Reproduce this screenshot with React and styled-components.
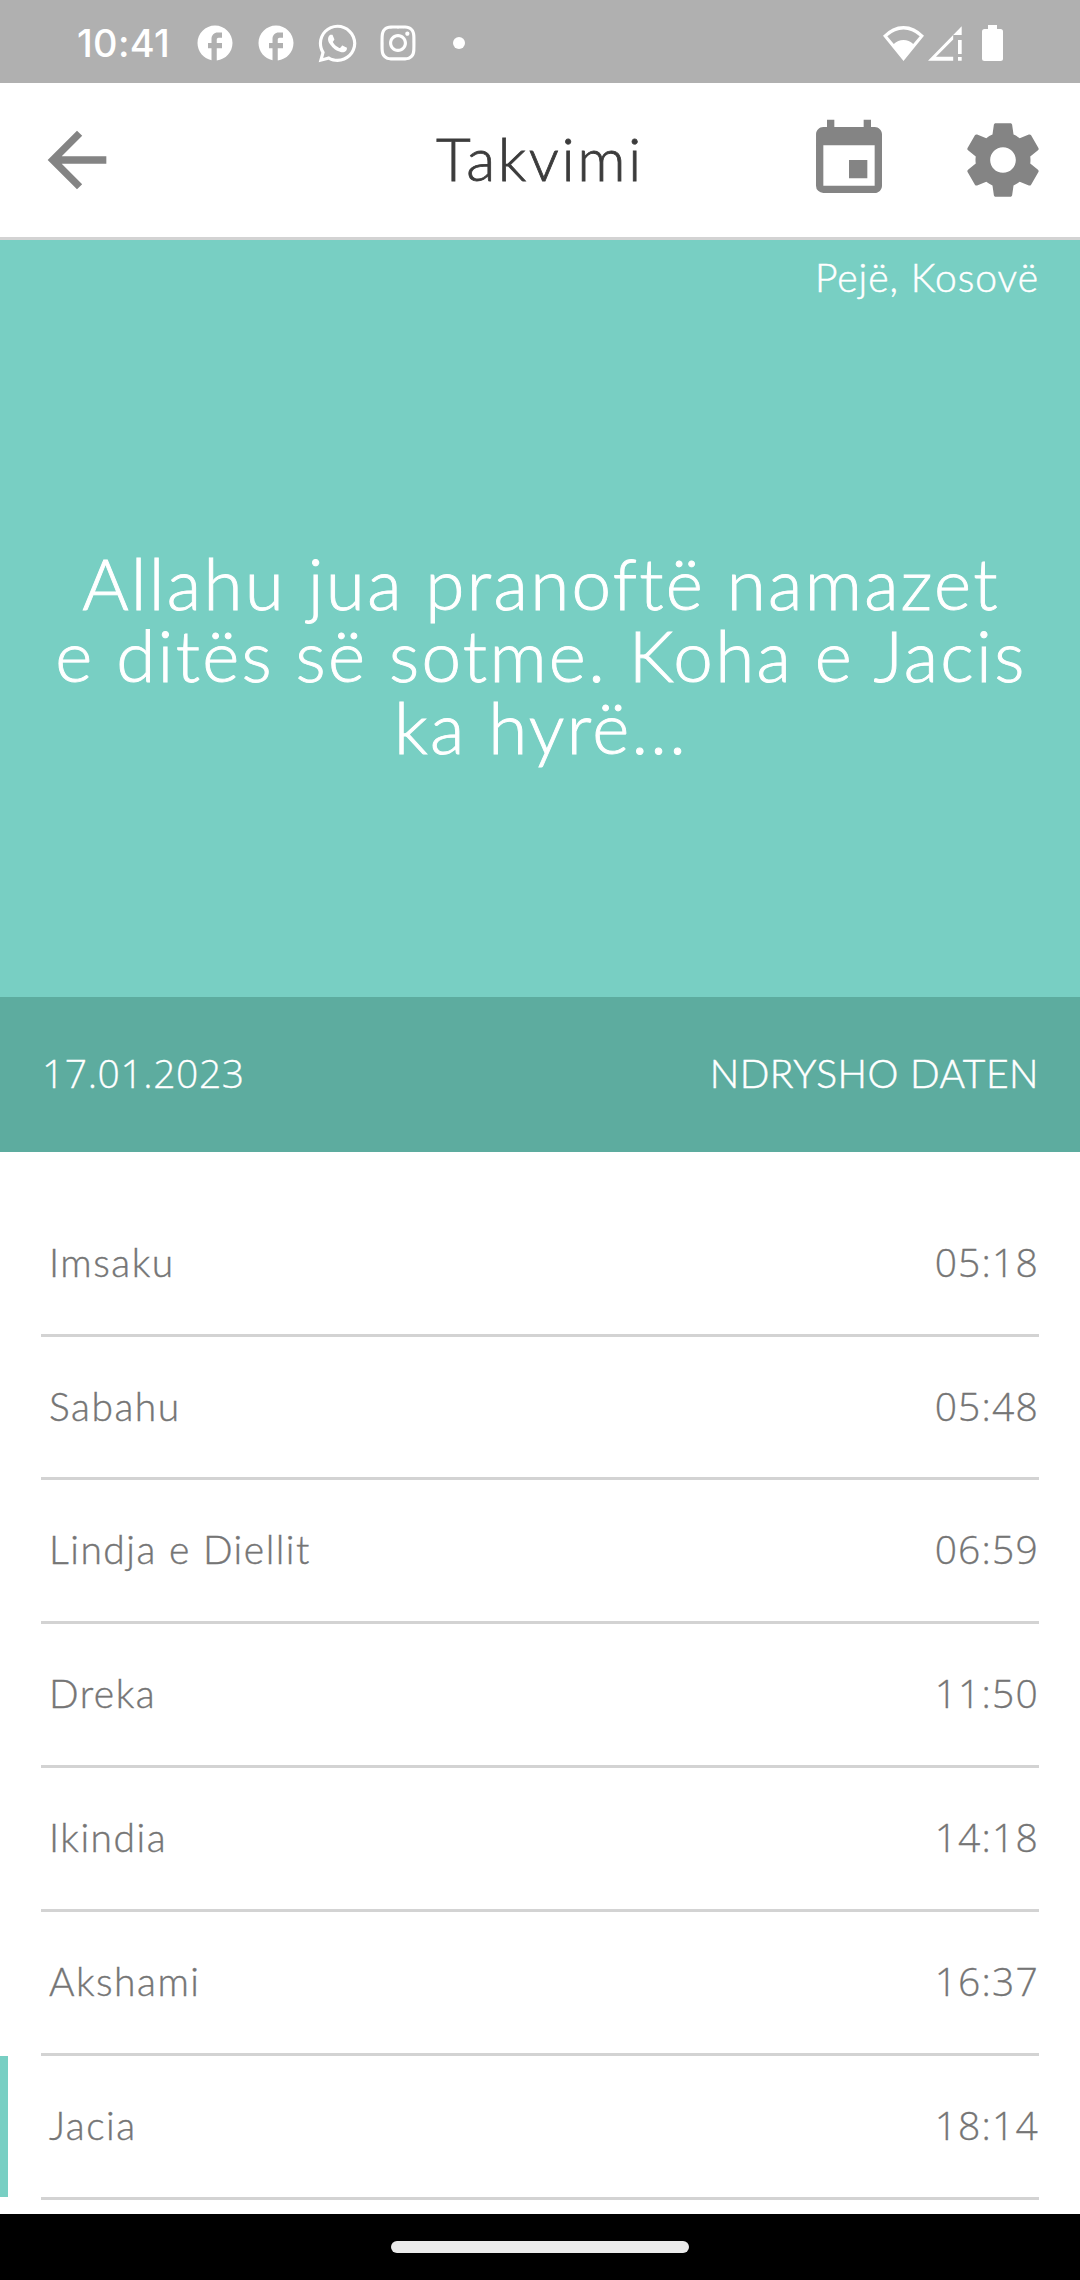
import React from "react";
import styled, { createGlobalStyle } from "styled-components";
import { MdArrowBack, MdEvent, MdFacebook } from "react-icons/md";
import { FaInstagram, FaWhatsapp } from "react-icons/fa";

const GlobalStyle = createGlobalStyle`
  * {
    box-sizing: border-box;
  }
  body {
    margin: 0;
    background: #ffffff;
    font-family: Lato, "Liberation Sans", sans-serif;
    font-weight: 300;
  }
  svg {
    display: block;
    flex-shrink: 0;
  }
`;

const Screen = styled.div`
  width: 1080px;
  height: 2280px;
  display: flex;
  flex-direction: column;
  overflow: hidden;
`;

const StatusBar = styled.div`
  height: 83px;
  padding: 3px 77px 0 77px;
  display: flex;
  align-items: center;
  justify-content: space-between;
  background: #b0b0b0;
  color: #ffffff;
`;

const StatusGroup = styled.div`
  display: flex;
  align-items: center;
`;

const Clock = styled.div`
  width: 117px;
  font-family: Inter, sans-serif;
  font-weight: 500;
  font-size: 38px;
  letter-spacing: 0.3px;
`;

const Notifications = styled.div`
  display: flex;
  align-items: center;
  gap: 19px;
`;

const MoreDot = styled.div`
  width: 12px;
  height: 12px;
  margin-left: 16px;
  border-radius: 50%;
  background: #ffffff;
`;

const Header = styled.div`
  height: 157px;
  padding: 0 33px;
  display: grid;
  grid-template-columns: 1fr auto 1fr;
  align-items: center;
  background: #ffffff;
  border-bottom: 3px solid #d3d3d3;
  color: #848484;
`;

const Title = styled.div`
  padding-bottom: 4px;
  font-size: 60px;
  line-height: 72px;
  letter-spacing: 2.5px;
  color: #3c3c3c;
  -webkit-text-stroke: 0.8px #3c3c3c;
`;

const Actions = styled.div`
  display: flex;
  justify-content: flex-end;
  gap: 66px;
`;

const Hero = styled.div`
  height: 757px;
  padding: 13px 41px 0;
  display: flex;
  flex-direction: column;
  background: #78cfc3;
  color: #ffffff;
`;

const Location = styled.div`
  align-self: flex-end;
  font-size: 39px;
  line-height: 48px;
  letter-spacing: 1px;
  -webkit-text-stroke: 0.5px #ffffff;
`;

const Message = styled.div`
  margin-top: 246px;
  padding-left: 2px;
  text-align: center;
  font-size: 71px;
  line-height: 72px;
  letter-spacing: 2.3px;
  white-space: nowrap;
  -webkit-text-stroke: 0.9px #ffffff;
`;

const DateBar = styled.div`
  height: 155px;
  padding: 0 41px 3px 42px;
  display: flex;
  align-items: center;
  justify-content: space-between;
  background: #5dac9f;
  color: #ffffff;
`;

const Numerals = styled.span`
  font-family: "Open Sans", sans-serif;
  font-size: 39px;
  line-height: 48px;
  letter-spacing: ${({ $spacing }) => $spacing};
  -webkit-text-stroke: 0.3px currentColor;
`;

const ChangeDate = styled.div`
  font-size: 39px;
  line-height: 48px;
  letter-spacing: 0.5px;
  -webkit-text-stroke: 0.5px #ffffff;
`;

const List = styled.div`
  flex: 1;
  padding-top: 40.77px;
`;

const Item = styled.div`
  height: 143.83px;
  display: flex;
  color: #757575;
`;

const Marker = styled.div`
  width: 8px;
  margin: 0 33px 3px 0;
  background: ${({ $active }) => ($active ? "#78cfc3" : "transparent")};
`;

const ItemBody = styled.div`
  flex: 1;
  margin-right: 41px;
  padding: 0 0 3px 8px;
  display: flex;
  align-items: center;
  justify-content: space-between;
  border-bottom: 3px solid #d3d3d3;
`;

const Name = styled.div`
  font-size: 39px;
  line-height: 48px;
  letter-spacing: 1.5px;
  -webkit-text-stroke: 0.4px currentColor;
`;

const NavBar = styled.div`
  height: 66px;
  display: flex;
  align-items: center;
  justify-content: center;
  background: #000000;
`;

const NavPill = styled.div`
  width: 298px;
  height: 12px;
  border-radius: 6px;
  background: #ebebeb;
`;

const WifiIcon = () => (
  <svg width="41" height="35" viewBox="0 0 41 35" fill="currentColor">
    <path
      fillRule="evenodd"
      d="M0 9.7Q9.3 0 20.5 0T41 9.7L20.5 35ZM4.3 10.2 10.8 18Q15 14 20.5 14T30.2 18L36.7 10.2Q29 3.4 20.5 3.4T4.3 10.2Z"
    />
  </svg>
);

const SignalIcon = () => (
  <svg width="34" height="35" viewBox="0 0 34 35" fill="currentColor">
    <path d="M0 34.7 33.7 0.3V9H25.2V13.5L8 30.8H25.2V34.7ZM30 14H33.7V28H30ZM30 31H33.7V34.7H30Z" />
  </svg>
);

const BatteryIcon = () => (
  <svg width="21" height="36" viewBox="0 0 21 36" fill="currentColor">
    <rect x="6" width="9" height="6" />
    <rect y="4" width="21" height="32" rx="2.5" />
  </svg>
);

const SettingsIcon = () => (
  <svg width="88" height="88" viewBox="0 0 24 24" fill="currentColor">
    <path d="M19.43 12.98c.04-.32.07-.64.07-.98s-.03-.66-.07-.98l2.11-1.65c.19-.15.24-.42.12-.64l-2-3.46c-.12-.22-.39-.3-.61-.22l-2.49 1c-.52-.4-1.08-.73-1.69-.98l-.38-2.65C14.46 2.18 14.25 2 14 2h-4c-.25 0-.46.18-.49.42l-.38 2.65c-.61.25-1.17.59-1.69.98l-2.49-1c-.23-.09-.49 0-.61.22l-2 3.46c-.13.22-.07.49.12.64l2.11 1.65c-.04.32-.07.65-.07.98s.03.66.07.98l-2.11 1.65c-.19.15-.24.42-.12.64l2 3.46c.12.22.39.3.61.22l2.49-1c.52.4 1.08.73 1.69.98l.38 2.65c.03.24.24.42.49.42h4c.25 0 .46-.18.49-.42l.38-2.65c.61-.25 1.17-.59 1.69-.98l2.49 1c.23.09.49 0 .61-.22l2-3.46c.12-.22.07-.49-.12-.64l-2.11-1.65zM12 15.5c-1.93 0-3.5-1.57-3.5-3.5s1.57-3.5 3.5-3.5 3.5 1.57 3.5 3.5-1.57 3.5-3.5 3.5z" />
  </svg>
);

const SystemIcons = styled(StatusGroup)`
  gap: 4px;

  svg:last-child {
    margin-left: 16px;
  }
`;

const times = [
  { name: "Imsaku", time: "05:18" },
  { name: "Sabahu", time: "05:48" },
  { name: "Lindja e Diellit", time: "06:59" },
  { name: "Dreka", time: "11:50" },
  { name: "Ikindia", time: "14:18" },
  { name: "Akshami", time: "16:37" },
  { name: "Jacia", time: "18:14", active: true },
];

const App = () => {
  return (
    <>
      <GlobalStyle />
      <Screen>
        <StatusBar>
          <StatusGroup>
            <Clock>10:41</Clock>
            <Notifications>
              <MdFacebook size={42} />
              <MdFacebook size={42} />
              <FaWhatsapp size={43} />
              <FaInstagram size={40} />
              <MoreDot />
            </Notifications>
          </StatusGroup>
          <SystemIcons>
            <WifiIcon />
            <SignalIcon />
            <BatteryIcon />
          </SystemIcons>
        </StatusBar>
        <Header>
          <MdArrowBack size={88} />
          <Title>Takvimi</Title>
          <Actions>
            <MdEvent size={88} />
            <SettingsIcon />
          </Actions>
        </Header>
        <Hero>
          <Location>Pejë, Kosovë</Location>
          <Message>
            Allahu jua pranoftë namazet
            <br />
            e ditës së sotme. Koha e Jacis
            <br />
            ka hyrë...
          </Message>
        </Hero>
        <DateBar>
          <Numerals $spacing="0.6px">17.01.2023</Numerals>
          <ChangeDate>NDRYSHO DATEN</ChangeDate>
        </DateBar>
        <List>
          {times.map((item) => (
            <Item key={item.name}>
              <Marker $active={item.active} />
              <ItemBody>
                <Name>{item.name}</Name>
                <Numerals $spacing="1.2px">{item.time}</Numerals>
              </ItemBody>
            </Item>
          ))}
        </List>
        <NavBar>
          <NavPill />
        </NavBar>
      </Screen>
    </>
  );
};

export default App;
